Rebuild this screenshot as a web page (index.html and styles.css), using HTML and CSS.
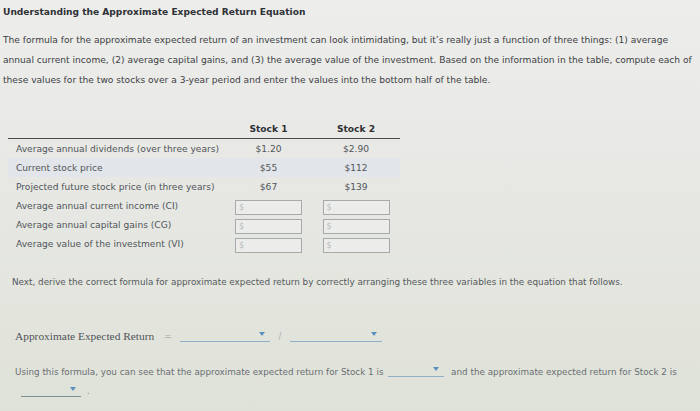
FILE: index.html
```html
<!DOCTYPE html>
<html>
<head>
<meta charset="utf-8">
<link rel="stylesheet" href="styles.css">
</head>
<body>
<div class="page">
  <h1 class="title">Understanding the Approximate Expected Return Equation</h1>
  <p class="intro">The formula for the approximate expected return of an investment can look intimidating, but it’s really just a function of three things: (1) average annual current income, (2) average capital gains, and (3) the average value of the investment. Based on the information in the table, compute each of these values for the two stocks over a 3-year period and enter the values into the bottom half of the table.</p>

  <div class="table">
    <div class="cell head"></div>
    <div class="cell head num">Stock 1</div>
    <div class="cell head num">Stock 2</div>

    <div class="cell label">Average annual dividends (over three years)</div>
    <div class="cell num">$1.20</div>
    <div class="cell num">$2.90</div>

    <div class="cell label hl">Current stock price</div>
    <div class="cell num hl">$55</div>
    <div class="cell num hl">$112</div>

    <div class="cell label">Projected future stock price (in three years)</div>
    <div class="cell num">$67</div>
    <div class="cell num">$139</div>

    <div class="cell label">Average annual current income (CI)</div>
    <div class="cell num"><span class="input">$</span></div>
    <div class="cell num"><span class="input">$</span></div>

    <div class="cell label">Average annual capital gains (CG)</div>
    <div class="cell num"><span class="input">$</span></div>
    <div class="cell num"><span class="input">$</span></div>

    <div class="cell label">Average value of the investment (VI)</div>
    <div class="cell num"><span class="input">$</span></div>
    <div class="cell num"><span class="input">$</span></div>
  </div>

  <p class="next">Next, derive the correct formula for approximate expected return by correctly arranging these three variables in the equation that follows.</p>

  <div class="formula">
    <span class="serif">Approximate Expected Return</span>
    <span class="op eq">=</span>
    <span class="drop w90"><span class="arrow"></span></span>
    <span class="op slash">/</span>
    <span class="drop w92"><span class="arrow"></span></span>
  </div>

  <div class="using">
    <div class="line1">Using this formula, you can see that the approximate expected return for Stock 1 is <span class="drop w55"><span class="arrow"></span></span> and the approximate expected return for Stock 2 is</div>
    <div class="line2"><span class="drop w60"><span class="arrow"></span></span><span class="dot">.</span></div>
  </div>
</div>
</body>
</html>
```

FILE: styles.css
```css
html, body {
  margin: 0;
  padding: 0;
}
body {
  width: 700px;
  height: 411px;
  overflow: hidden;
  background: linear-gradient(180deg, #ededeb 0%, #e7e8e4 45%, #dfe2d8 100%);
  font-family: "DejaVu Sans", Verdana, sans-serif;
  color: #3a3d40;
}
.page {
  padding: 4px 0 0 3px;
}
.title {
  margin: 0;
  font-size: 9.1px;
  line-height: 17px;
  font-weight: bold;
  color: #2e3135;
}
.intro {
  margin: 9px 0 0 0;
  width: 690px;
  font-size: 9.1px;
  line-height: 20px;
  color: #3c4044;
}
.table {
  margin: 30px 0 0 5px;
  width: 392px;
  display: grid;
  grid-template-columns: 217px 87px 88px;
  font-size: 9.1px;
  color: #50555a;
}
.cell {
  height: 19px;
  display: flex;
  align-items: center;
}
.cell.head {
  height: 18px;
  border-bottom: 1px solid #4a4d50;
  font-weight: bold;
  color: #2e3135;
}
.label {
  padding-left: 8px;
}
.num {
  justify-content: center;
}
.hl {
  background: #e2e5e9;
}
.input {
  box-sizing: border-box;
  width: 67px;
  height: 15px;
  border: 1px solid #a6aaa8;
  background: #ecedeb;
  color: #b8bcbc;
  font-size: 8px;
  line-height: 13px;
  padding-left: 3px;
  margin-top: 3px;
}
.next {
  margin: 20px 0 0 9px;
  font-size: 8.8px;
  line-height: 18px;
  color: #55595d;
}
.formula {
  margin: 36px 0 0 12px;
  display: flex;
  align-items: flex-end;
  height: 18px;
  font-size: 8.8px;
}
.serif {
  font-family: "Liberation Serif", "Times New Roman", serif;
  font-size: 11.4px;
  color: #50545a;
  line-height: 18px;
}
.op {
  color: #a8acae;
  line-height: 18px;
}
.eq {
  margin: 0 8px 0 10px;
}
.slash {
  margin: 0 8px 0 9px;
}
.drop {
  position: relative;
  display: inline-block;
  height: 12px;
  border-bottom: 1px solid #8fb0c8;
  margin-bottom: 3px;
  vertical-align: baseline;
}
.w90 { width: 90px; }
.w92 { width: 92px; }
.w55 { width: 56px; }
.w60 { width: 60px; }
.arrow {
  position: absolute;
  right: 5px;
  top: 3px;
  width: 0;
  height: 0;
  border-left: 3.5px solid transparent;
  border-right: 3.5px solid transparent;
  border-top: 4px solid #5a8fc0;
}
.using {
  margin: 18px 0 0 12px;
  font-size: 8.8px;
  color: #6a6e72;
}
.line1 {
  line-height: 18px;
  white-space: nowrap;
}
.line1 .drop {
  margin: 0 4px 0 2px;
  vertical-align: -2px;
}
.line2 {
  margin: 2px 0 0 6px;
  display: flex;
  align-items: flex-end;
  height: 16px;
}
.line2 .drop {
  border-bottom-color: #7f8f98;
  margin-bottom: 2px;
}
.dot {
  margin-left: 6px;
  color: #888;
  line-height: 16px;
}
```
